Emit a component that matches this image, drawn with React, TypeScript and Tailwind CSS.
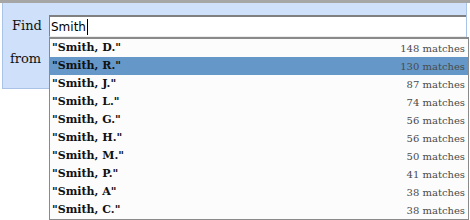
import React from 'react'

type Match = { name: string; count: number }

const MATCHES: Match[] = [
  { name: 'Smith, D.', count: 148 },
  { name: 'Smith, R.', count: 130 },
  { name: 'Smith, J.', count: 87 },
  { name: 'Smith, L.', count: 74 },
  { name: 'Smith, G.', count: 56 },
  { name: 'Smith, H.', count: 56 },
  { name: 'Smith, M.', count: 50 },
  { name: 'Smith, P.', count: 41 },
  { name: 'Smith, A', count: 38 },
  { name: 'Smith, C.', count: 38 },
]

const serif = "font-['DejaVu_Serif',serif]"

export default function App() {
  const selected = 1

  return (
    <div className="relative w-[470px] h-[220px] bg-white overflow-hidden">
      <div className="h-[3px] bg-[#a6a6a6]" />

      {/* search panel */}
      <div className="ml-[2px] mr-[3px] h-[86px] bg-[#cfe1fa] border border-[#a9c3e6] border-t-0">
        <div className="flex items-center pt-[12px]">
          <div className={`w-[46px] pl-[9px] text-[13px] text-[#111] ${serif}`}>Find</div>
          <div className="flex-1 h-[22px] bg-white border-t-2 border-l border-[#808080] border-b border-b-[#ececec] flex items-center pl-[1px]">
            <span className="text-[12px] text-black font-['DejaVu_Sans',sans-serif]">Smith</span>
            <span className="w-px h-[16px] bg-black ml-px" />
          </div>
        </div>
        <div className="flex items-center mt-[11px]">
          <div className={`w-[46px] pl-[7px] text-[13px] text-[#111] ${serif}`}>from</div>
          <div className="flex-1 h-[22px] bg-white" />
        </div>
      </div>

      {/* suggestion menu */}
      <div className="absolute left-[49px] top-[37px] w-[420px] bg-[#fcfcfc] border border-[#8a8a8a] border-t-2">
        {MATCHES.map((m, idx) => (
          <div
            key={idx}
            className={`h-[18px] flex items-center justify-between pl-[2px] pr-[3px] pt-px ${serif} ${
              idx === selected ? 'bg-[#6598c9]' : ''
            }`}
          >
            <span className="text-[11px] font-bold text-[#111]">"{m.name}"</span>
            <span className="text-[10px] text-[#4a4a4a]">{m.count} matches</span>
          </div>
        ))}
      </div>
    </div>
  )
}
